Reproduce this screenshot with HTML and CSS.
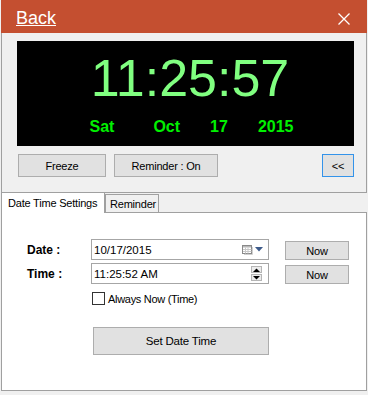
FILE: index.html
```html
<!DOCTYPE html>
<html lang="en">
<head>
  <meta charset="UTF-8">
  <title>Clock - Date Time Settings</title>
  <link rel="stylesheet" href="styles.css">
</head>
<body>
  <div class="titlebar">
    <a class="back" href="#">Back</a>
    <svg class="close" width="12" height="12" viewBox="0 0 12 12">
      <path d="M0.5 0.5 L11.5 11.5 M11.5 0.5 L0.5 11.5" stroke="#fff" stroke-width="1.3" fill="none"/>
    </svg>
  </div>

  <!-- Clock area -->
  <div class="clock-box">
    <div class="display">
      <div class="time">11:25:57</div>
      <div class="date-row">
        <span class="day">Sat</span>
        <span>Oct</span>
        <span>17</span>
        <span>2015</span>
      </div>
    </div>
    <div class="controls">
      <button class="btn freeze">Freeze</button>
      <button class="btn reminder">Reminder : On</button>
      <button class="btn collapse">&lt;&lt;</button>
    </div>
  </div>

  <!-- Tabs -->
  <div class="tabs">
    <div class="tab active">Date Time Settings</div>
    <div class="tab">Reminder</div>
  </div>
  <div class="tab-panel">
    <div class="form-grid">
      <label class="field-label">Date :</label>
      <div class="field">
        <span class="field-text">10/17/2015</span>
        <span class="picker">
          <svg width="11" height="10" viewBox="0 0 11 10">
            <rect x="0.5" y="0.5" width="9" height="8" fill="#fff" stroke="#8a8a8a"/>
            <rect x="1" y="1" width="8" height="1.5" fill="#b8b8b8"/>
            <path d="M1 4.5 H9.5 M1 6.5 H9.5 M3.5 2.5 V8.5 M6 2.5 V8.5" stroke="#c8c8c8" stroke-width="1"/>
            <path d="M10.5 2 V9.5 H2" stroke="#d0d0d0" stroke-width="1" fill="none"/>
          </svg>
          <svg width="8" height="5" viewBox="0 0 8 5">
            <path d="M0 0 H8 L4 4.5 Z" fill="#3d5a8a"/>
          </svg>
        </span>
      </div>
      <button class="btn now">Now</button>

      <label class="field-label">Time :</label>
      <div class="field">
        <span class="field-text">11:25:52 AM</span>
        <span class="spinner">
          <span class="spin-btn">
            <svg width="7" height="4" viewBox="0 0 7 4"><path d="M0 4 H7 L3.5 0.5 Z" fill="#000"/></svg>
          </span>
          <span class="spin-btn">
            <svg width="7" height="4" viewBox="0 0 7 4"><path d="M0 0 H7 L3.5 3.5 Z" fill="#000"/></svg>
          </span>
        </span>
      </div>
      <button class="btn now">Now</button>

      <label class="check-row">
        <span class="checkbox"></span>
        Always Now (Time)
      </label>

      <button class="btn set-btn">Set Date Time</button>
    </div>
  </div>
</body>
</html>
```

FILE: styles.css
```css
body {
  margin: 0;
  padding: 0 1px;
  width: 366px;
  height: 395px;
  background-color: #f0f0f0;
  font-family: "Liberation Sans", Arial, sans-serif;
  color: #000;
  overflow: hidden;
}
.titlebar {
  height: 33px;
  box-sizing: border-box;
  background-color: #c44f30;
  display: flex;
  align-items: flex-start;
  justify-content: space-between;
  padding: 8px 17px 0 15px;
}
.back {
  color: #fff;
  font-size: 18px;
  line-height: 21px;
  text-decoration: underline;
}
.close {
  margin-top: 5px;
}
.clock-box {
  border: 1px solid #a0a0a0;
  border-top: none;
  padding: 8px 12px 15px 15px;
}
.display {
  width: 337px;
  height: 105px;
  box-sizing: border-box;
  background-color: #000;
  padding-top: 7px;
}
.time {
  font-size: 52px;
  line-height: 60px;
  color: #80ff80;
  text-align: center;
  padding-left: 9px;
}
.date-row {
  margin-top: 10px;
  display: flex;
  justify-content: center;
  gap: 30px;
  padding-left: 12px;
  font-size: 16px;
  line-height: 18px;
  font-weight: bold;
  color: #00f000;
}
.date-row .day {
  margin-right: 9px;
}
.controls {
  display: flex;
  margin-top: 8px;
}
.btn {
  font-family: "Liberation Sans", Arial, sans-serif;
  font-size: 11px;
  letter-spacing: -0.2px;
  color: #000;
  background-color: #e1e1e1;
  border: 1px solid #adadad;
  padding: 0;
  margin: 0;
  box-sizing: border-box;
}
.freeze {
  width: 88px;
  height: 23px;
  margin-left: 1px;
}
.reminder {
  width: 104px;
  height: 23px;
  margin-left: 8px;
}
.collapse {
  width: 32px;
  height: 23px;
  margin-left: auto;
  border-color: #3393ea;
}
.tabs {
  display: flex;
  align-items: flex-end;
  height: 19px;
  font-size: 11px;
  letter-spacing: -0.2px;
}
.tab {
  height: 18px;
  box-sizing: border-box;
  border: 1px solid #a0a0a0;
  border-bottom: none;
  background-color: #f0f0f0;
  padding: 3px 4px 0 4px;
  width: 54px;
}
.tab.active {
  height: 20px;
  width: 104px;
  background-color: #fff;
  border-top: none;
  padding: 4px 0 0 6px;
  margin-bottom: -1px;
  position: relative;
  z-index: 1;
}
.tab-panel {
  height: 179px;
  box-sizing: border-box;
  border: 1px solid #a0a0a0;
  background-color: #fff;
  padding: 26px 0 0 25px;
}
.form-grid {
  display: grid;
  grid-template-columns: 64px 178px 80px;
  grid-auto-rows: 21px;
  row-gap: 3px;
}
.field-label {
  font-size: 12px;
  font-weight: bold;
  align-self: center;
  padding-top: 1px;
}
.field {
  border: 1px solid #a6a6a6;
  display: flex;
  align-items: center;
  padding: 0 5px 0 2px;
  font-size: 11.5px;
}
.field-text {
  flex: 1;
}
.picker {
  display: flex;
  align-items: center;
  gap: 2px;
}
.spinner {
  display: flex;
  flex-direction: column;
  gap: 1px;
  margin-right: 1px;
}
.spin-btn {
  width: 11px;
  height: 7px;
  box-sizing: border-box;
  border: 1px solid #b5b5b5;
  background-color: #ececec;
  display: flex;
  align-items: center;
  justify-content: center;
}
.now {
  width: 64px;
  height: 19px;
  margin-left: 16px;
  align-self: end;
}
.check-row {
  grid-column: 2;
  display: flex;
  align-items: center;
  gap: 3px;
  margin-top: 4px;
  height: 15px;
  font-size: 11px;
  letter-spacing: -0.3px;
}
.checkbox {
  width: 13px;
  height: 13px;
  box-sizing: border-box;
  border: 1px solid #333;
  background-color: #fff;
  margin-left: 1px;
}
.set-btn {
  grid-column: 2;
  width: 176px;
  height: 28px;
  margin-left: 2px;
  margin-top: 16px;
  font-size: 11.5px;
}
```
